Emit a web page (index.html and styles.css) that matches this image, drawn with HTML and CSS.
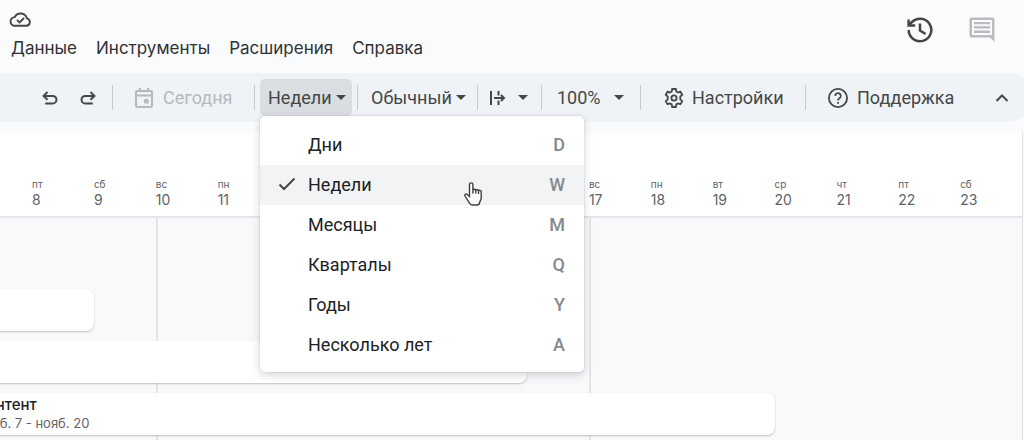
FILE: index.html
```html
<!DOCTYPE html>
<html lang="ru">
<head>
<meta charset="utf-8">
<title>Таймлайн</title>
<link rel="stylesheet" href="styles.css">
</head>
<body>
<div class="app">
  <header class="header">
    <div class="header-main">
      <svg class="cloud" viewBox="0 0 24 16" aria-hidden="true"><path d="M6 14.700h12.200a4 4 0 0 0 .6-7.900A6.900 6.900 0 0 0 5.900 5.500 4.600 4.600 0 0 0 6 14.700z"/><path d="M8.200 8.400l2.800 2.700 4.800-4.700"/></svg>
      <nav class="menubar">
        <button class="menu-link">Данные</button>
        <button class="menu-link">Инструменты</button>
        <button class="menu-link">Расширения</button>
        <button class="menu-link">Справка</button>
      </nav>
    </div>
    <div class="header-actions">
      <button class="icon-button" aria-label="История версий"><svg class="history" viewBox="0 0 26 26" aria-hidden="true"><path d="M1.700 13A11.300 11.300 0 1 0 5 5L2.200 7.800"/><path d="M1.600 2.400V8.600H8.200M13 6.500V13.500L18.600 17"/></svg></button>
      <button class="icon-button" aria-label="Комментарии"><svg class="comment" viewBox="0 0 26 26" aria-hidden="true"><path fill-rule="evenodd" d="M2.500.500h21a2 2 0 0 1 2 2V25l-4.500-4.500H2.500a2 2 0 0 1-2-2v-16a2 2 0 0 1 2-2zM3 3v15h20V3z"/><path d="M5 5h16v2.300H5zM5 9.300h16v2.300H5zM5 13.600h16v2.300H5z"/></svg></button>
    </div>
  </header>

  <div class="toolbar" role="toolbar">
    <button class="tool tool-icon" aria-label="Отменить"><svg class="arrow" viewBox="0 0 16 16" aria-hidden="true"><path d="M5.500 2L1.600 5.900l3.900 3.900M2 5.900h8.700a3.800 3.800 0 0 1 0 7.600H3.200"/></svg></button>
    <button class="tool tool-icon" aria-label="Повторить"><svg class="arrow" viewBox="0 0 16 16" aria-hidden="true"><path d="M10.500 2l3.900 3.900-3.900 3.900M14 5.900H5.300a3.800 3.800 0 0 0 0 7.600h7.500"/></svg></button>
    <span class="separator separator-spaced"></span>
    <button class="tool tool-today" disabled><svg class="calendar" viewBox="0 0 18 20" aria-hidden="true"><rect x="1" y="3" width="16" height="16" rx="1.500"/><path d="M1 7.500h16M4.800 0v4M13.200 0v4"/><circle cx="11.300" cy="13.300" r="1.500"/></svg>Сегодня</button>
    <span class="separator"></span>
    <div class="dropdown">
      <button class="tool tool-scale" aria-haspopup="menu" aria-expanded="true">Недели<span class="caret"></span></button>
      <div class="menu" role="menu">
        <button class="menu-item" role="menuitemradio"><span class="menu-check"></span><span class="menu-label">Дни</span><kbd class="key">D</kbd></button>
        <button class="menu-item menu-item-active" role="menuitemradio" aria-checked="true"><span class="menu-check"><svg class="check" viewBox="0 0 18 14" aria-hidden="true"><path d="M1.500 7.500l4.500 4.500L16.500 1.500"/></svg></span><span class="menu-label">Недели</span><kbd class="key">W</kbd></button>
        <button class="menu-item" role="menuitemradio"><span class="menu-check"></span><span class="menu-label">Месяцы</span><kbd class="key">M</kbd></button>
        <button class="menu-item" role="menuitemradio"><span class="menu-check"></span><span class="menu-label">Кварталы</span><kbd class="key">Q</kbd></button>
        <button class="menu-item" role="menuitemradio"><span class="menu-check"></span><span class="menu-label">Годы</span><kbd class="key">Y</kbd></button>
        <button class="menu-item" role="menuitemradio"><span class="menu-check"></span><span class="menu-label">Несколько лет</span><kbd class="key">A</kbd></button>
        <svg class="pointer" viewBox="0 0 18 24" aria-hidden="true"><path d="M5.500 14.500V2.600a1.700 1.700 0 0 1 3.400 0V8a1.500 1.500 0 0 1 2.800.500 1.500 1.500 0 0 1 2.800.700 1.400 1.400 0 0 1 2.700.700v6.300c0 1.400-1.200 2.600-1.500 4.100-.200 1.700-1.500 2.700-3 2.700H8.600c-1.600 0-2.700-.900-3.400-2.300L1 14c-.700-1.500.900-2.600 2.200-1.500z"/><path d="M8.900 7.500v4M11.700 8.500v3M14.500 9.200v2.800"/></svg>
      </div>
    </div>
    <span class="separator separator-spaced"></span>
    <button class="tool tool-view">Обычный<span class="caret"></span></button>
    <span class="separator"></span>
    <button class="tool tool-fit" aria-label="Интервал"><svg class="fit" viewBox="0 0 16 16" aria-hidden="true"><path d="M1 1v14M4 8h10M11 5l3 3-3 3M8.500 1v4.500M8.500 10.500V15"/></svg><span class="caret"></span></button>
    <span class="separator"></span>
    <button class="tool tool-zoom">100%<span class="caret"></span></button>
    <span class="separator"></span>
    <button class="tool tool-settings"><svg class="gear" viewBox="0 0 20 20" aria-hidden="true"><path d="M8.200 1h3.600l.5 2.500 1.700 1 2.400-.8 1.800 3.100-1.900 1.700v2.900l1.900 1.700-1.800 3.100-2.400-.8-1.700 1-.5 2.600H8.200l-.5-2.600-1.700-1-2.400.8-1.800-3.100 1.900-1.700V8.500L1.800 6.800l1.800-3.100 2.400.8 1.700-1z"/><circle cx="10" cy="10" r="2.600"/></svg>Настройки</button>
    <span class="separator"></span>
    <button class="tool tool-support"><svg class="help" viewBox="0 0 20 20" aria-hidden="true"><circle cx="10" cy="10" r="9.100"/><path d="M7.200 7.900a2.800 2.800 0 1 1 4.500 2.200c-1 .800-1.700 1.200-1.700 2.300"/><path d="M10 13.900v1.900"/></svg>Поддержка</button>
    <button class="tool tool-icon tool-collapse" aria-label="Скрыть меню"><svg class="chevron" viewBox="0 0 14 10" aria-hidden="true"><path d="M1.500 8L7 2.500 12.500 8"/></svg></button>
  </div>

  <main class="timeline">
    <div class="days">
      <div class="day day-first"><span class="weekday">пт</span><span class="date">8</span></div>
      <div class="day"><span class="weekday">сб</span><span class="date">9</span></div>
      <div class="day"><span class="weekday">вс</span><span class="date">10</span></div>
      <div class="day"><span class="weekday">пн</span><span class="date">11</span></div>
      <div class="day day-resume"><span class="weekday">вс</span><span class="date">17</span></div>
      <div class="day"><span class="weekday">пн</span><span class="date">18</span></div>
      <div class="day"><span class="weekday">вт</span><span class="date">19</span></div>
      <div class="day"><span class="weekday">ср</span><span class="date">20</span></div>
      <div class="day"><span class="weekday">чт</span><span class="date">21</span></div>
      <div class="day"><span class="weekday">пт</span><span class="date">22</span></div>
      <div class="day"><span class="weekday">сб</span><span class="date">23</span></div>
    </div>
    <div class="lanes">
      <span class="week-line week-line-one"></span>
      <span class="week-line week-line-two"></span>
      <div class="card card-short"></div>
      <div class="card card-medium"></div>
      <div class="card card-long"><span class="card-title">Контент</span><span class="card-dates">нояб. 7 - нояб. 20</span></div>
    </div>
  </main>
</div>
</body>
</html>
```
FILE: styles.css
```css
* { box-sizing: border-box; }
body {
  margin: 0;
  font-family: Roboto, "Noto Sans", sans-serif;
  font-size: 18px;
  color: #444746;
  background: #f9fbfd;
}
button {
  margin: 0;
  padding: 0;
  border: 0;
  background: none;
  font: inherit;
  color: inherit;
  white-space: nowrap;
}
svg { display: block; flex: none; fill: none; stroke: #444746; stroke-width: 2; }
.app { display: flex; flex-direction: column; height: 100vh; overflow: hidden; }

.header { display: flex; justify-content: space-between; padding: 12px 29px 12px 9px; height: 73px; flex: none; }
.header-main { display: flex; flex-direction: column; gap: 9px; }
.cloud { width: 23px; height: 15px; stroke-width: 2; }
.menubar { display: flex; gap: 19px; padding-left: 2px; }
.menu-link { font-family: Inter, sans-serif; font-size: 17px; line-height: 24px; color: #303134; }
.header-actions { display: flex; gap: 36px; align-items: flex-start; padding-top: 5px; }
.icon-button { display: flex; }
.history { width: 26px; height: 26px; stroke-width: 2.5px; }
.comment { width: 26px; height: 26px; fill: #b9bbbe; stroke: none; }

.toolbar {
  display: flex;
  align-items: center;
  flex: none;
  height: 49px;
  margin-right: -8px;
  padding: 0 11px 0 31px;
  background: #eff2f7;
  border-radius: 0 24px 24px 0;
}
.tool { display: flex; align-items: center; height: 37px; flex: none; }
.tool-icon { width: 38px; justify-content: center; }
.separator { width: 1px; height: 25px; background: #c7cacd; flex: none; }
.separator-spaced { margin-left: 5px; }
.caret { border: 5px solid transparent; border-top-color: #444746; border-bottom: 0; }
.arrow { width: 16px; height: 16px; }
.tool-today { width: 141px; gap: 10px; padding-left: 22px; color: #b6b9bc; }
.calendar { width: 18px; height: 20px; stroke: #b6b9bc; }
.dropdown { position: relative; margin-left: 5px; }
.tool-scale { width: 92px; gap: 4px; padding-left: 8px; border-radius: 5px; background: #dadde2; }
.tool-view { width: 119px; gap: 4px; padding-left: 13px; }
.tool-fit { width: 63px; gap: 12px; padding-left: 12px; }
.fit { width: 16px; height: 16px; }
.tool-zoom { width: 98px; gap: 13px; padding-left: 15px; }
.tool-settings { width: 164px; gap: 8px; padding-left: 23px; }
.gear { width: 20px; height: 20px; stroke-width: 1.8px; }
.tool-support { width: 160px; gap: 9px; padding-left: 22px; }
.help { width: 20px; height: 20px; stroke-width: 1.8px; }
.tool-collapse { margin-left: auto; }
.chevron { width: 14px; height: 10px; }

.menu {
  position: absolute;
  top: 100%;
  left: 0;
  z-index: 2;
  width: 324px;
  padding: 9px 0 7px;
  border-radius: 5px;
  background: #fff;
  box-shadow: 0 0 0 1px rgba(60, 64, 67, .06), 0 3px 8px rgba(60, 64, 67, .22);
}
.menu-item { display: flex; align-items: center; width: 100%; height: 40px; padding: 0 19px 2px 18px; color: #202124; text-align: left; }
.menu-item-active { background: #f1f3f4; }
.menu-check { width: 30px; }
.check { width: 18px; height: 14px; }
.menu-label { flex: 1; }
.key { font: inherit; font-weight: 500; color: #85898e; }
.pointer { position: absolute; top: 66px; left: 204px; width: 18px; height: 24px; fill: #fff; stroke: #3c4043; stroke-width: 1.4px; }

.timeline { display: flex; flex-direction: column; flex: 1; margin-top: 10px; margin-right: 1px; border-right: 1px solid #dfe1e4; }
.days, .lanes { display: grid; grid-template-columns: 32px repeat(16, 1fr); }
.days { height: 86px; padding-top: 46px; border-bottom: 2px solid #e4e6e9; background: #fff; }
.day { display: flex; flex-direction: column; color: #5f6368; font-family: Inter, sans-serif; }
.day-first { grid-column: 2; }
.day-resume { grid-column: 11; }
.weekday { font-size: 10px; line-height: 12px; }
.date { font-size: 14px; line-height: 20px; }
.lanes { flex: 1; grid-template-rows: 71px 52px 52px 1fr; align-items: start; background: #f8f9fb; }
.week-line { grid-row: 1 / -1; align-self: stretch; width: 2px; background: #e3e5e8; }
.week-line-one { grid-column: 4; }
.week-line-two { grid-column: 11; }
.card {
  display: flex;
  flex-direction: column;
  height: 42px;
  margin-left: -32px;
  padding: 2px 0 0 9px;
  border-radius: 0 8px 8px 0;
  background: #fff;
  box-shadow: 0 1px 2px rgba(60, 64, 67, .3);
}
.card-short { grid-area: 2 / 1 / 3 / 3; }
.card-medium { grid-area: 3 / 1 / 4 / 10; }
.card-long { grid-area: 4 / 1 / 5 / 14; }
.card-title { font: 500 15px/19px Inter, sans-serif; color: #202124; }
.card-dates { font: 13px/19px Inter, sans-serif; color: #5f6368; }
```
